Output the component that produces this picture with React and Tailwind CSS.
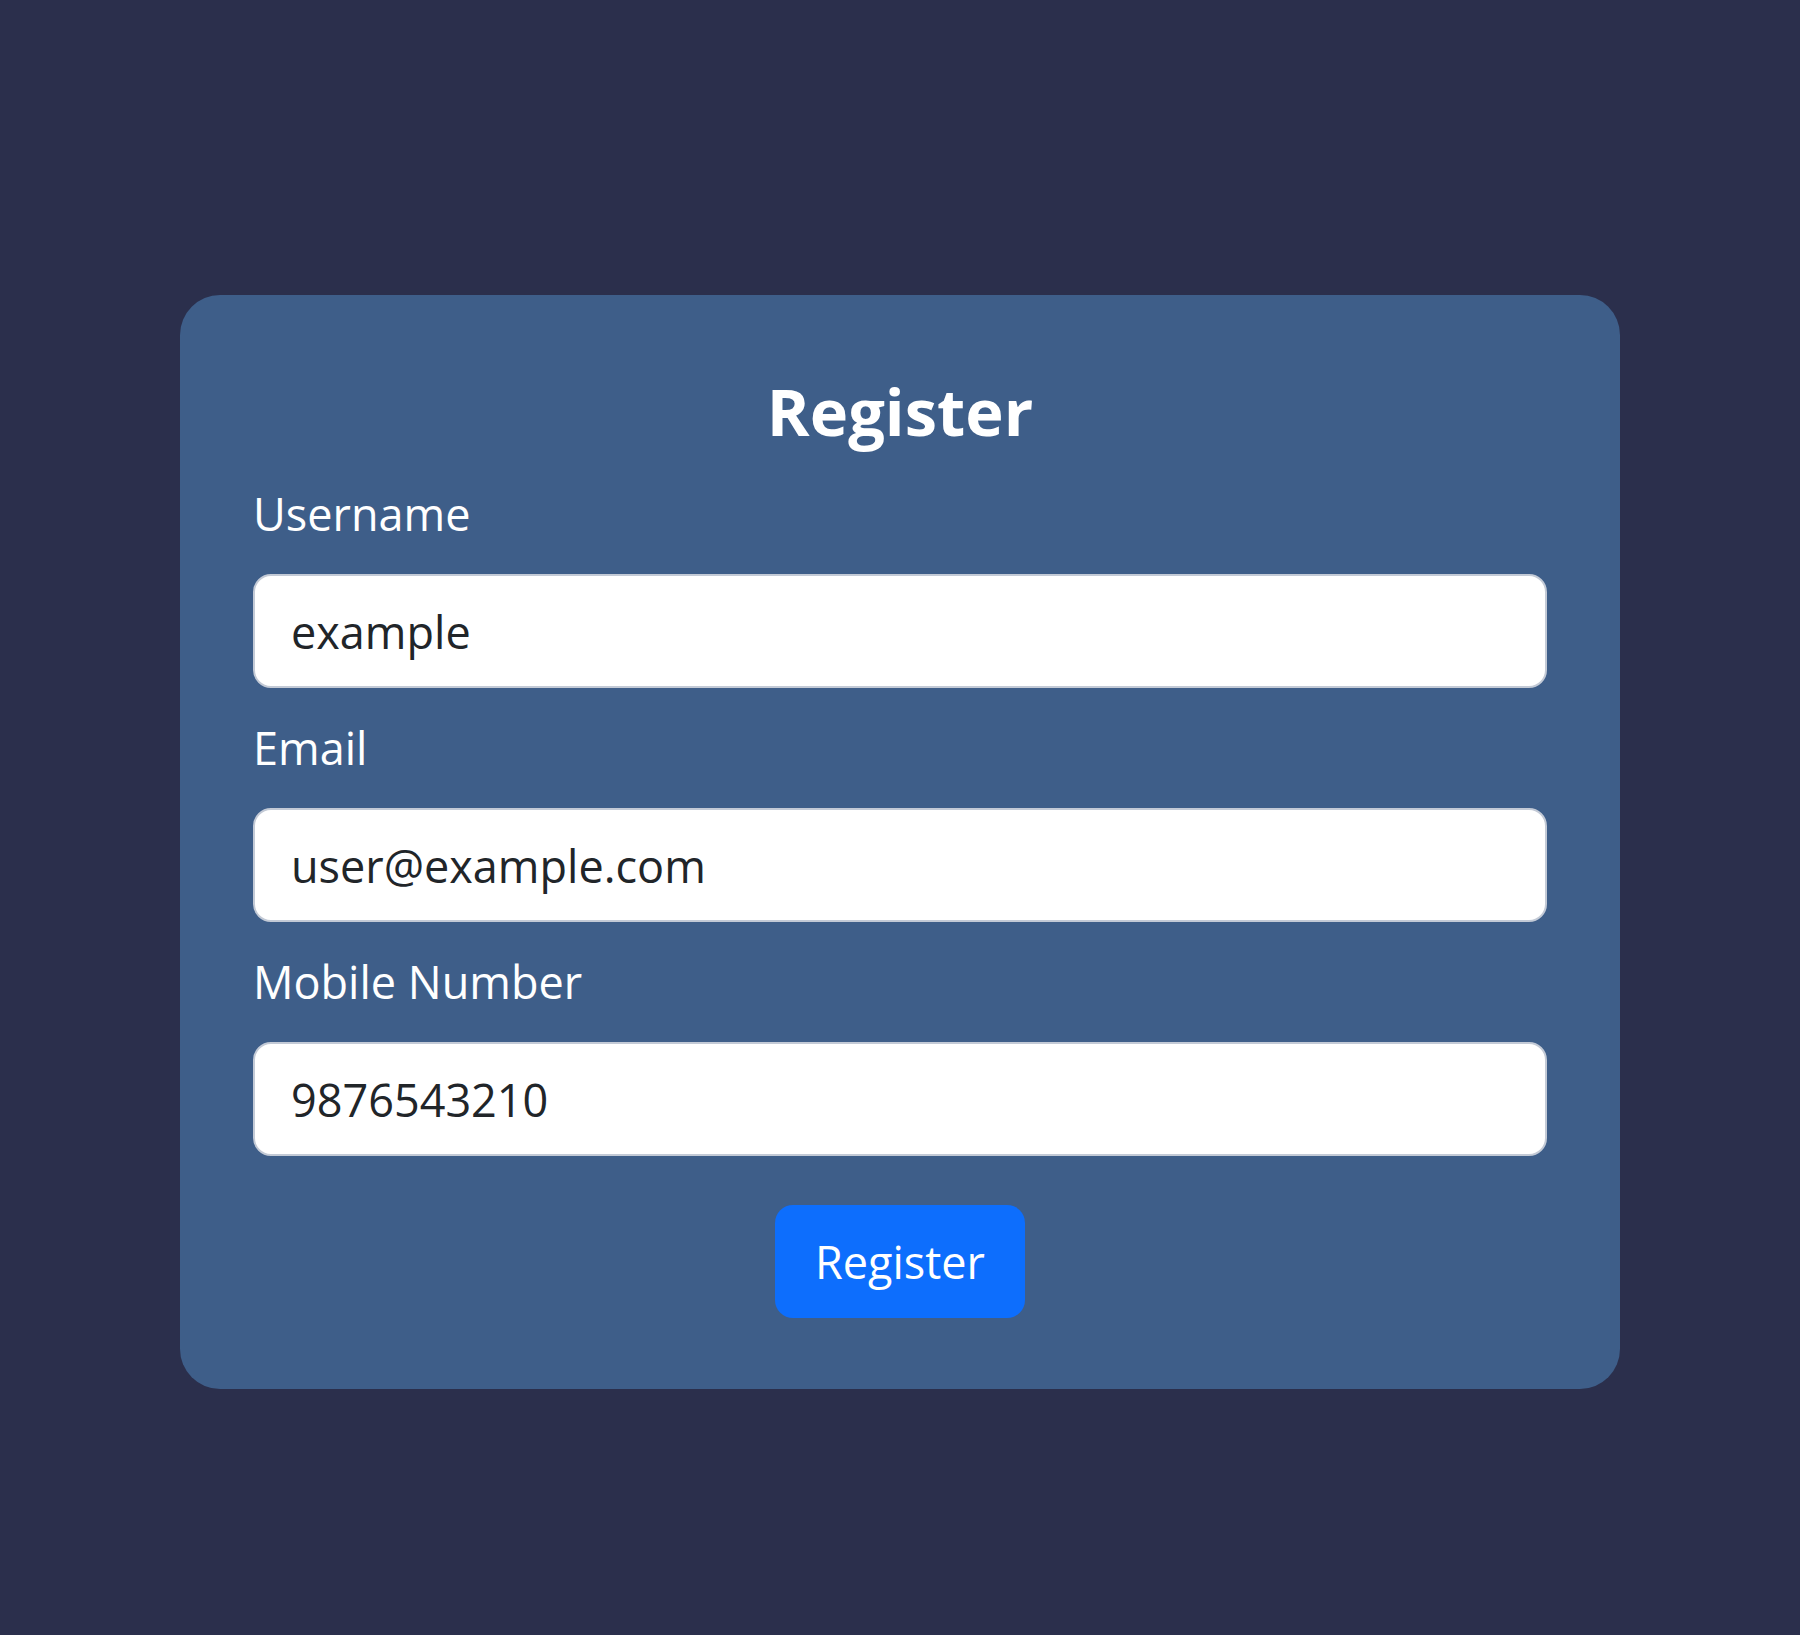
import React from 'react';

const fields = [
  { id: 'username', label: 'Username', type: 'text', value: 'example' },
  { id: 'email', label: 'Email', type: 'email', value: 'user@example.com' },
  { id: 'mobile', label: 'Mobile Number', type: 'tel', value: '9876543210' },
];

export default function App() {
  return (
    <div
      className="min-h-[1635px] w-full bg-[#2b2f4c] pt-[295px]"
      style={{ fontFamily: '"Open Sans", "Noto Sans", sans-serif' }}
    >
      <div className="mx-auto w-[1440px] rounded-[40px] bg-[#3e5e89] px-[73px] pt-[80px] pb-[71px]">
        <h2 className="text-center text-[65px] font-bold leading-[72px] text-white mb-[31px]">Register</h2>

        <form onSubmit={(e) => e.preventDefault()}>
          {fields.map((f) => (
            <div key={f.id} className="mb-[24px]">
              <label htmlFor={f.id} className="block text-[45px] leading-[72px] text-white mb-[24px]">
                {f.label}
              </label>
              <input
                id={f.id}
                type={f.type}
                defaultValue={f.value}
                className="block h-[114px] w-full rounded-[18px] border-2 border-[#c3cad6] bg-white px-[36px] text-[45px] text-[#212529] outline-none"
              />
            </div>
          ))}

          <div className="flex justify-center pt-[25px]">
            <button
              type="submit"
              className="h-[113px] w-[250px] rounded-[18px] bg-[#0d6efd] text-[45px] text-white"
            >
              Register
            </button>
          </div>
        </form>
      </div>
    </div>
  );
}
